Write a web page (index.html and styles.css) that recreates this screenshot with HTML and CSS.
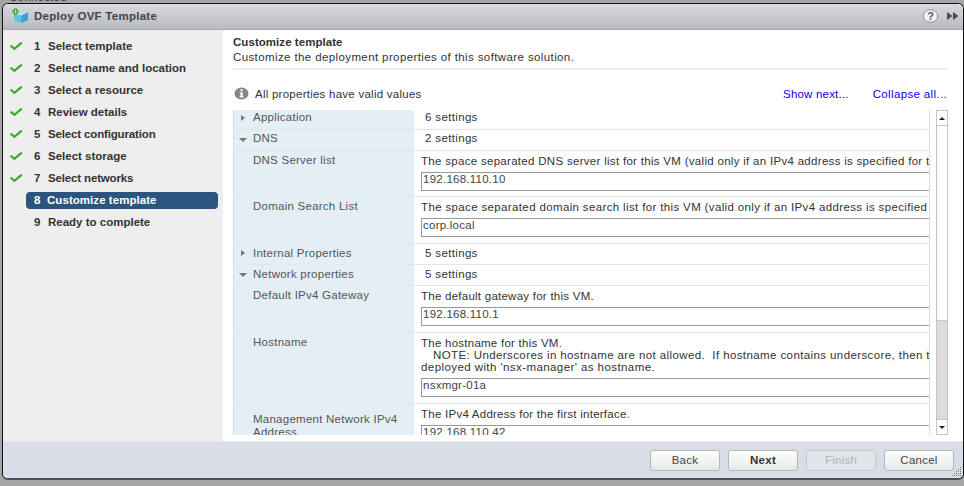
FILE: index.html
```
<!DOCTYPE html>
<html lang="en">
<head>
<meta charset="utf-8">
<title>Deploy OVF Template</title>
<link rel="stylesheet" href="styles.css">
</head>
<body>
<svg width="0" height="0" class="defs">
  <symbol id="check" viewBox="0 0 14 10"><path d="M.6 4.6 4.4 7.8 11.8 1.6" fill="none" stroke="#3bab2c" stroke-width="2.3"/></symbol>
</svg>
<div class="backdrop">Connected</div>
<div class="window">
  <header class="titlebar">
    <svg class="logo" width="17" height="16" viewBox="0 0 17 16">
      <path d="M2 5.5 9 3l7 1.6v7.3L9.5 15 2 12.5z" fill="#62bfe8"/>
      <path d="M2 5.5 9 3l7 1.6-6.5 2.8z" fill="#b9e4f6"/>
      <path d="M9.5 7.4 16 4.6v7.3L9.5 15z" fill="#3a9fd2"/>
      <path d="M3.5 0.5v6M0.5 3.5h6" stroke="#2d9b22" stroke-width="3"/>
      <path d="M3.5 1.3v4.4M1.3 3.5h4.4" stroke="#a5ec83" stroke-width="1"/>
    </svg>
    <h1>Deploy OVF Template</h1>
    <svg class="tools" width="38" height="16" viewBox="0 0 38 16">
      <ellipse cx="7.5" cy="8" rx="7.2" ry="6.2" fill="#f2f2f2" stroke="#8c8c8c"/>
      <text x="7.5" y="12" text-anchor="middle">?</text>
      <path d="M24 4v8l5.5-4zM30 4v8l5.5-4z" fill="#4c4e52"/>
    </svg>
  </header>
  <div class="body">
    <nav class="steps">
      <div class="step"><svg class="check"><use href="#check"/></svg><span class="num">1</span><span>Select template</span></div>
      <div class="step"><svg class="check"><use href="#check"/></svg><span class="num">2</span><span>Select name and location</span></div>
      <div class="step"><svg class="check"><use href="#check"/></svg><span class="num">3</span><span>Select a resource</span></div>
      <div class="step"><svg class="check"><use href="#check"/></svg><span class="num">4</span><span>Review details</span></div>
      <div class="step tight"><svg class="check"><use href="#check"/></svg><span class="num">5</span><span>Select configuration</span></div>
      <div class="step"><svg class="check"><use href="#check"/></svg><span class="num">6</span><span>Select storage</span></div>
      <div class="step tight"><svg class="check"><use href="#check"/></svg><span class="num">7</span><span>Select networks</span></div>
      <div class="step active"><span class="num">8</span><span>Customize template</span></div>
      <div class="step"><span class="check"></span><span class="num">9</span><span>Ready to complete</span></div>
    </nav>
    <main class="content">
      <div class="heading">
        <h2>Customize template</h2>
        <p>Customize the deployment properties of this software solution.</p>
      </div>
      <div class="status">
        <svg width="15" height="13" viewBox="0 0 15 13"><ellipse cx="7.5" cy="6.5" rx="7" ry="6" fill="#868686"/><path d="M6.5 2.2h2.2v1.9H6.5zM5.8 5.2h2.9v4h.9v1.2H5.6V9.2h.9V6.4h-.7z" fill="#fff"/></svg>
        <span class="valid">All properties have valid values</span>
        <a class="next">Show next...</a>
        <a class="collapse">Collapse all...</a>
      </div>
      <div class="listing">
        <div class="grid">
          <div class="row group first"><div class="label"><i class="closed"></i>Application</div><div class="value">6 settings</div></div>
          <div class="row group"><div class="label"><i class="open"></i>DNS</div><div class="value">2 settings</div></div>
          <div class="row dns"><div class="label">DNS Server list</div><div class="value"><p class="server">The space separated DNS server list for this VM (valid only if an IPv4 address is specified for t</p><div class="field">192.168.110.10</div></div></div>
          <div class="row"><div class="label">Domain Search List</div><div class="value"><p class="domain">The space separated domain search list for this VM (valid only if an IPv4 address is specified</p><div class="field">corp.local</div></div></div>
          <div class="row group lower"><div class="label"><i class="closed"></i>Internal Properties</div><div class="value">5 settings</div></div>
          <div class="row group lower"><div class="label"><i class="open"></i>Network properties</div><div class="value">5 settings</div></div>
          <div class="row"><div class="label">Default IPv4 Gateway</div><div class="value"><p>The default gateway for this VM.</p><div class="field">192.168.110.1</div></div></div>
          <div class="row host"><div class="label">Hostname</div><div class="value"><p>The hostname for this VM.</p><p class="note">NOTE: Underscores in hostname are not allowed.&nbsp; If hostname contains underscore, then t</p><p class="wide">deployed with 'nsx-manager' as hostname.</p><div class="field">nsxmgr-01a</div></div></div>
          <div class="row mgmt"><div class="label">Management Network IPv4<br>Address</div><div class="value"><p>The IPv4 Address for the first interface.</p><div class="field">192.168.110.42</div></div></div>
        </div>
        <div class="scrollbar"><div class="arrow"><i class="up"></i></div><div class="thumb"></div><div class="track"></div><div class="arrow"><i class="down"></i></div></div>
      </div>
    </main>
  </div>
  <footer class="actions">
    <button>Back</button>
    <button class="primary">Next</button>
    <button class="disabled">Finish</button>
    <button>Cancel</button>
    <svg class="grip" width="10" height="9" viewBox="0 0 10 9"><path d="M9 .5h1M7 2.5h1M9 2.5h1M5 4.5h1M7 4.5h1M9 4.5h1M3 6.5h1M5 6.5h1M7 6.5h1M9 6.5h1M1 8.5h1M3 8.5h1M5 8.5h1M7 8.5h1M9 8.5h1" stroke="#777"/></svg>
  </footer>
</div>
</body>
</html>
```

FILE: styles.css
```
* { box-sizing: border-box; }
body {
  margin: 0;
  width: 964px;
  height: 486px;
  overflow: hidden;
  background: #a5a5a5;
  font: 11.5px/12px "Liberation Sans", Arial, sans-serif;
  letter-spacing: .25px;
  color: #333;
  display: flex;
  flex-direction: column;
}
h1, h2, p { margin: 0; font-size: 11.5px; }
.defs { position: absolute; }
.backdrop { height: 3px; padding-left: 9px; line-height: 12px; overflow: hidden; display: flex; align-items: flex-end; color: #333; }
.window {
  width: 962px;
  height: 477px;
  margin-left: 2px;
  border: 1px solid #111;
  border-bottom: 2px solid #4d5054;
  border-radius: 6px;
  overflow: hidden;
  display: flex;
  flex-direction: column;
  background: #fff;
}
.titlebar {
  height: 26px;
  flex: none;
  display: flex;
  align-items: center;
  padding: 0 2px 2px 9px;
  background: linear-gradient(#d9dadd, #b9bac0);
  border-bottom: 1px solid #aaa;
}
.titlebar h1 { margin-left: 5px; flex: 1; color: #444; letter-spacing: .27px; }
.tools { font-weight: bold; font-size: 11px; fill: #555; letter-spacing: 0; }
.body { flex: 1; display: flex; min-height: 0; }
.steps { width: 220px; background: #eee; padding: 5px 5px 0 7px; }
.step { height: 22px; display: flex; align-items: center; font-weight: bold; letter-spacing: 0; white-space: nowrap; }
.tight { letter-spacing: -.15px; }
.check { width: 14px; height: 10px; }
.num { margin-left: 10px; width: 14px; }
.active { margin: 3px 0 2px 16px; padding-bottom: 1px; height: 17px; background: #2b547e; color: #fff; border-radius: 4px; letter-spacing: .05px; }
.active .num { margin-left: 8px; width: 13px; }
.content { flex: 1; min-width: 0; padding: 6px 15px 0 10px; display: flex; flex-direction: column; }
.heading { height: 34px; border-bottom: 2px solid #eee; }
.heading h2 { line-height: 13px; letter-spacing: .05px; }
.heading p { line-height: 17px; white-space: nowrap; letter-spacing: .39px; }
.status { height: 40px; padding-top: 7px; display: flex; align-items: center; white-space: nowrap; }
.status svg { margin: 0 6px 0 1px; }
.valid { flex: 1; }
.status a { color: #0a00f5; }
.status .next { letter-spacing: .2px; }
.status .collapse { margin: 0 1px 0 24px; letter-spacing: .35px; }
.listing { height: 325px; display: flex; justify-content: space-between; }
.grid { width: 697px; overflow: hidden; border: solid #ddd; border-width: 0 1px; }
.row { display: flex; height: 47px; border-bottom: 1px solid #e3e5e6; }
.label { width: 180px; flex: none; background: #e4eff5; color: #555; padding: 3px 0 0 19px; display: flex; position: relative; white-space: nowrap; }
.value { flex: 1; min-width: 0; padding: 4px 0 0 7px; white-space: nowrap; }
.group { height: 21px; }
.group .value { padding: 2px 0 0 11px; letter-spacing: .35px; }
.group .label { padding-top: 2px; }
.first { height: 20px; }
.first .value, .first .label { padding-top: 1px; }
.lower .value, .lower .label { padding-top: 3px; }
.label i { position: absolute; }
.closed { left: 7px; top: 5px; border: solid transparent; border-width: 3px 0 3px 4px; border-left-color: #777; }
.lower .closed { top: 6px; }
.open { left: 5px; top: 8px; border: solid transparent; border-width: 4px 4px 0; border-top-color: #777; }
.field { height: 19px; margin-top: 5px; border: 1px solid #999; border-right: 0; background: #fff; padding: 0 1px; color: #444; }
.dns { height: 46px; }
.server { letter-spacing: .3px; }
.domain { letter-spacing: .36px; }
.wide { letter-spacing: .42px; }
.host { height: 71px; }
.note { padding-left: 12px; letter-spacing: .4px; }
.mgmt { height: 60px; }
.mgmt .label { padding-top: 9px; line-height: 13px; }
.scrollbar { width: 12px; display: flex; flex-direction: column; border: 1px solid #c4c4c4; background: #ddd; }
.arrow { height: 14px; flex: none; background: #fff; display: flex; align-items: center; justify-content: center; }
.up { border: 3px solid transparent; border-top-width: 0; border-bottom-color: #222; }
.down { border: 3px solid transparent; border-bottom-width: 0; border-top-color: #222; }
.thumb { height: 196px; flex: none; background: #fff; border: solid #c4c4c4; border-width: 1px 0; }
.track { flex: 1; background: #dcdcdc; border-bottom: 1px solid #c4c4c4; }
.actions { height: 37px; flex: none; display: flex; gap: 8px; justify-content: flex-end; padding: 8px 9px 0; background: #d9dde5; border-top: 1px solid #e4e7ec; position: relative; }
.actions button { width: 70px; height: 21px; padding: 0 0 1px; font: 11.5px/12px "Liberation Sans", Arial, sans-serif; letter-spacing: .25px; color: #444; border: 1px solid #b3b6bb; border-radius: 3px; background: linear-gradient(#fff, #e8e8e8); }
.actions .primary { font-weight: bold; color: #333; }
.actions .disabled { color: #b0b3b7; background: #e2e5e9; border-color: #c6c9cd; }
.grip { position: absolute; right: 2px; bottom: 2px; }
```
